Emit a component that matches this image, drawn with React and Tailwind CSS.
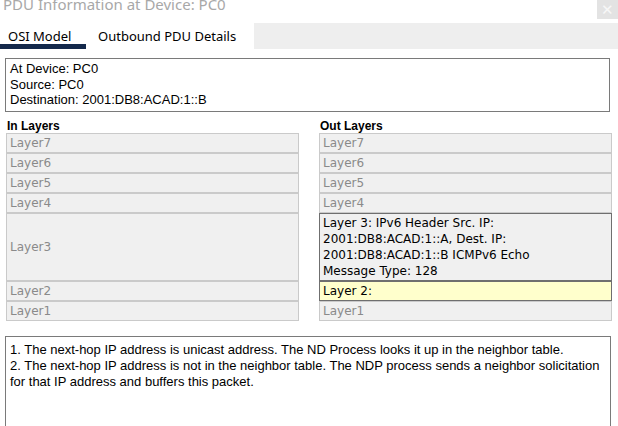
import React from 'react';

const arial = { fontFamily: '"Liberation Sans", Arial, sans-serif' };
const verdana = { fontFamily: '"DejaVu Sans", Verdana, sans-serif' };

function LayerRow({ label, tall, dark, yellow, children }) {
  const border = dark ? 'border-[#6f6f6f]' : 'border-[#cacaca]';
  const bg = yellow ? 'bg-[#ffffcc]' : 'bg-[#f0f0f0]';
  return (
    <div
      style={verdana}
      className={`border ${border} ${bg} px-[3px] text-[12px] leading-[19px] ${tall ? 'h-[68px] flex items-center' : 'h-[20px]'} ${children ? 'text-black' : 'text-[#8a8a8a]'}`}
    >
      {children || label}
    </div>
  );
}

function LayerColumn({ title, rows }) {
  return (
    <div className="w-[293px] flex flex-col">
      <div style={arial} className="text-[12px] font-bold leading-[14px] h-[14px] text-black pl-[1px]">{title}</div>
      {rows}
    </div>
  );
}

export default function App() {
  const inRows = (
    <>
      <LayerRow label="Layer7" />
      <LayerRow label="Layer6" />
      <LayerRow label="Layer5" />
      <LayerRow label="Layer4" />
      <LayerRow label="Layer3" tall />
      <LayerRow label="Layer2" />
      <LayerRow label="Layer1" />
    </>
  );
  const outRows = (
    <>
      <LayerRow label="Layer7" />
      <LayerRow label="Layer6" />
      <LayerRow label="Layer5" />
      <LayerRow label="Layer4" />
      <div style={verdana} className="h-[68px] border border-[#6f6f6f] bg-[#f0f0f0] px-[3px] pt-[1px] text-[12px] leading-[16px] text-black">
        Layer 3: IPv6 Header Src. IP:<br />
        2001:DB8:ACAD:1::A, Dest. IP:<br />
        2001:DB8:ACAD:1::B ICMPv6 Echo<br />
        Message Type: 128
      </div>
      <LayerRow label="Layer 2:" dark yellow>Layer 2:</LayerRow>
      <LayerRow label="Layer1" />
    </>
  );

  return (
    <div className="w-[618px] h-[426px] bg-white overflow-hidden relative">
      <div className="h-[23px] pl-[3px] overflow-hidden">
        <div style={{ fontFamily: '"Noto Sans", "Open Sans", sans-serif' }} className="text-[15px] leading-[15px] -mt-[3px] text-[#a8a8a8]">
          PDU Information at Device: PC0
        </div>
      </div>
      <div className="absolute top-0 right-0 w-[21px] h-[19px] bg-[#e3e3e3] flex items-center justify-center text-[#f7f7f7] text-[15px] leading-none">
        ✕
      </div>

      <div className="flex h-[26px]" style={{ fontFamily: '"Noto Sans", "Open Sans", sans-serif' }}>
        <div className="w-[86px] relative text-[13px] text-black pl-[8px] pt-[4px]">
          OSI Model
          <div className="absolute left-0 right-0 top-[21px] h-[5px] bg-[#14294b]" />
        </div>
        <div className="w-[168px] text-[13px] text-black pl-[12px] pt-[4px]">Outbound PDU Details</div>
        <div className="flex-1 bg-[#eeeeee]" />
      </div>

      <div style={arial} className="mt-[9px] ml-[5px] w-[605px] h-[54px] border border-[#7a7a7a] px-[4px] pt-[2px] text-[13px] leading-[15.5px] text-black">
        <div>At Device: PC0</div>
        <div>Source: PC0</div>
        <div>Destination: 2001:DB8:ACAD:1::B</div>
      </div>

      <div className="flex mt-[7px] pl-[6px] gap-[20px]">
        <LayerColumn title="In Layers" rows={inRows} />
        <LayerColumn title="Out Layers" rows={outRows} />
      </div>

      <div style={arial} className="mt-[15px] ml-[5px] w-[606px] h-[100px] border border-[#7a7a7a] px-[4px] pt-[5px] text-[13px] leading-[16px] text-black">
        1. The next-hop IP address is unicast address. The ND Process looks it up in the neighbor table.<br />
        2. The next-hop IP address is not in the neighbor table. The NDP process sends a neighbor solicitation for that IP address and buffers this packet.
      </div>
    </div>
  );
}
